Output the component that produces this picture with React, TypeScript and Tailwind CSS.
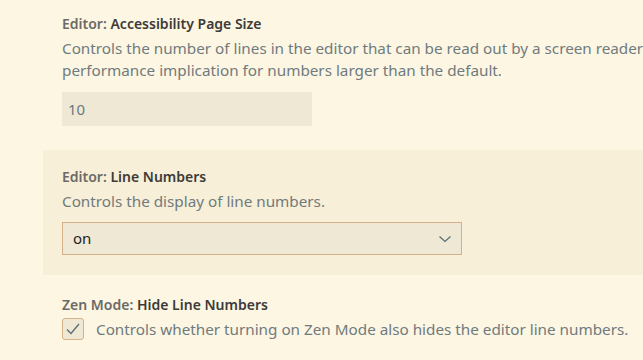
const FONT = "font-['Segoe_UI','Noto_Sans',sans-serif]";

function Title({ category, name }: { category: string; name: string }) {
    return (
        <div className="text-[14px] leading-[22px] font-semibold whitespace-nowrap">
            <span className="text-[#6b6a66]">{category}: </span>
            <span className="text-[#3c3b38]">{name}</span>
        </div>
    );
}

export default function App() {
    return (
        <div className={`${FONT} w-full h-[360px] overflow-hidden bg-[#fdf6e3]`}>
            {/* Accessibility Page Size */}
            <div className="ml-[43px] pl-[19px] pt-[13px] pb-[24px] overflow-hidden">
                <Title category="Editor" name="Accessibility Page Size" />
                <div className="mt-[2px] text-[15.25px] leading-[22px] text-[#6f7b7e] whitespace-nowrap">
                    <div>Controls the number of lines in the editor that can be read out by a screen reader</div>
                    <div>performance implication for numbers larger than the default.</div>
                </div>
                <div className="mt-[11px] w-[250px] h-[34px] bg-[#eee8d5] flex items-center px-[6px] text-[15px] text-[#6c7a80]">
                    10
                </div>
            </div>

            {/* Line Numbers (focused row) */}
            <div className="ml-[43px] pl-[19px] pt-[16px] pb-[20px] bg-[#f8efd8]">
                <Title category="Editor" name="Line Numbers" />
                <div className="mt-[2px] text-[15.25px] leading-[22px] text-[#6f7b7e] whitespace-nowrap">
                    Controls the display of line numbers.
                </div>
                <div className="mt-[10px] w-[400px] h-[33px] bg-[#eee8d5] border border-[#d4b189] flex items-center justify-between pl-[10px] pr-[9px]">
                    <span className="text-[15px] text-[#1f1f1f]">on</span>
                    <svg width="14" height="10" viewBox="0 0 14 10" className="mt-[1px]">
                        <polyline points="1.5,2.5 7,7.5 12.5,2.5" fill="none" stroke="#586e75" strokeWidth="1.2" />
                    </svg>
                </div>
            </div>

            {/* Zen Mode: Hide Line Numbers */}
            <div className="ml-[43px] pl-[19px] pt-[19px]">
                <Title category="Zen Mode" name="Hide Line Numbers" />
                <div className="mt-[2px] flex items-center gap-[12px]">
                    <div className="w-[22px] h-[22px] rounded-[3px] border border-[#d4b38b] bg-[#eee8d5] flex items-center justify-center">
                        <svg width="16" height="16" viewBox="0 0 16 16">
                            <polyline points="2,8.5 6,12.5 14,3" fill="none" stroke="#586e75" strokeWidth="1.3" />
                        </svg>
                    </div>
                    <span className="text-[15.25px] leading-[22px] text-[#6f7b7e] whitespace-nowrap">
                        Controls whether turning on Zen Mode also hides the editor line numbers.
                    </span>
                </div>
            </div>
        </div>
    );
}
